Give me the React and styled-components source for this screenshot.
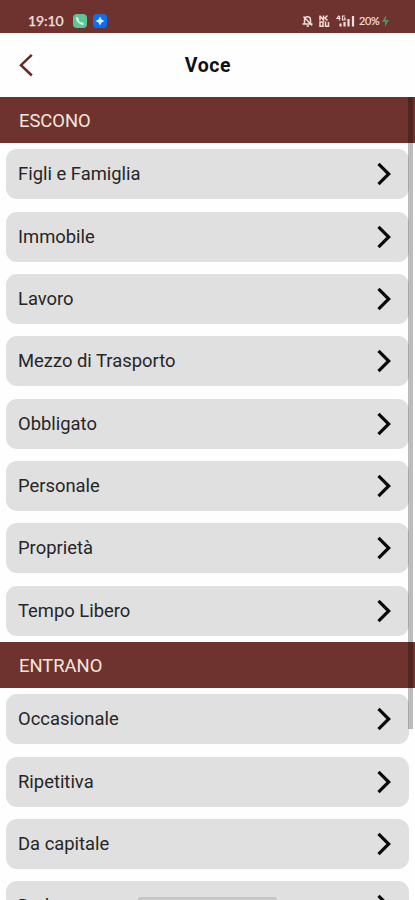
import React from "react";
import styled, { createGlobalStyle } from "styled-components";

const Global = createGlobalStyle`
  * { box-sizing: border-box; }
  body { margin: 0; background: #fff; font-family: Roboto, sans-serif; overflow: hidden; }
`;
const Screen = styled.div`
  position: relative;
  width: 415px;
  height: 900px;
  overflow: hidden;
  display: flex;
  flex-direction: column;
  background: #fefefe;
`;
const StatusBar = styled.div`
  flex: none;
  height: 32.5px;
  padding: 10px 26px 0 28px;
  display: flex;
  align-items: center;
  background: #6e332e;
  color: #f3dfda;
`;
const Clock = styled.span`
  width: 45px;
  font: 500 14px/22px Lato, sans-serif;
  letter-spacing: -0.1px;
  -webkit-text-stroke: 0.25px currentColor;
`;
const AppBadge = styled.span`
  width: 14px;
  height: 14px;
  margin-right: 6px;
  border-radius: 4px;
  display: flex;
  background: ${(p) => p.$color};
`;
const StatusIcons = styled.div`
  margin-left: auto;
  display: flex;
  align-items: center;
`;
const Battery = styled.span`
  margin-left: 3px;
  width: 23px;
  font: 400 10.8px/14px Lato, sans-serif;
  letter-spacing: -0.3px;
  -webkit-text-stroke: 0.2px currentColor;
`;
const TitleBar = styled.header`
  flex: none;
  height: 64.5px;
  padding: 0 18px;
  display: grid;
  grid-template-columns: 24px 1fr 24px;
  align-items: center;
`;
const Title = styled.h1`
  margin: 3px 0 0 1px;
  text-align: center;
  color: #111;
  font: 700 19.5px/24px Roboto, sans-serif;
  letter-spacing: 0.6px;
`;
const SectionHeader = styled.h2`
  margin: 0;
  height: 46px;
  padding: 2px 19px 0;
  display: flex;
  align-items: center;
  background: #6e332e;
  color: #f5e6df;
  font: 400 18.4px/24px Roboto, sans-serif;
`;
const List = styled.div`
  display: flex;
  flex-direction: column;
  gap: 12.35px;
  padding: 6.4px 6px 6px;
`;
const Row = styled.div`
  height: 50px;
  padding: 0 17px 0 12px;
  display: flex;
  align-items: center;
  justify-content: space-between;
  border-radius: 11px;
  background: #e0e0e0;
  color: #262626;
  font: 400 18.4px/24px Roboto, sans-serif;
`;
const ScrollBar = styled.div`
  position: absolute;
  left: 408px;
  top: 97px;
  width: 5px;
  height: 632px;
  background: rgba(0, 0, 0, 0.26);
`;
const HomeBar = styled.div`
  position: absolute;
  left: 138px;
  top: 896.5px;
  width: 139px;
  height: 4px;
  border-radius: 2px 2px 0 0;
  background: #c7c7c7;
`;

const Chevron = () => (
  <svg width="16" height="24" viewBox="0 0 16 24" fill="none" stroke="#0a0a0a" strokeWidth="3.2">
    <path d="M2.500 1.800 12.700 12 2.500 22.200" />
  </svg>
);

const sections = [
  ["ESCONO", ["Figli e Famiglia", "Immobile", "Lavoro", "Mezzo di Trasporto", "Obbligato", "Personale", "Proprietà", "Tempo Libero"]],
  ["ENTRANO", ["Occasionale", "Ripetitiva", "Da capitale", "Da lavoro"]],
];

export default function App() {
  return (
    <Screen>
      <Global />
      <StatusBar>
        <Clock>19:10</Clock>
        <AppBadge $color="#5fc494">
          <svg width="14" height="14" fill="none" stroke="#d9f5e6" strokeWidth="1.8" strokeLinecap="round">
            <path d="M4 4c0 3 3 6 6 6M4 4l1 1.5M10 10 8.5 9" />
          </svg>
        </AppBadge>
        <AppBadge $color="#0b6ff0">
          <svg width="14" height="14" fill="#d8ebff">
            <path d="M7 2.5 8.6 5.4 11.5 7 8.6 8.6 7 11.5 5.4 8.6 2.5 7 5.4 5.4Z" />
          </svg>
        </AppBadge>
        <StatusIcons>
          <svg width="54" height="14" viewBox="0 0 54 14" fill="none" stroke="#f0dcd8" strokeWidth="1.5">
            <path d="M0.500 10h10M2.500 9.500V6c0-4.500 6-4.500 6 0v3.500M4.500 12h2.500M1.500 2.500l8.500 9" />
            <path d="M18 1.500v5M18 2l3.500 4V1.500M25.500 1.500l-2.500 2.500 2.500 2.500M18 8h3v4.200h-3zM23.500 7.500v4.700h3V8" />
            <path d="M37 1.500 35 4.500h3.500M37.500 2v4.500M43 2h-2.500v4H43V4h-1" strokeWidth="1.200" />
            <path d="M38.500 9.500v3M42.500 8v4.500M46.500 5v7.500M51 2v10.500" strokeWidth="2.200" />
          </svg>
          <Battery>20%</Battery>
          <svg width="7" height="12" fill="#45935b"><path d="M4 0 0 7h3v5l4-7H4Z" /></svg>
        </StatusIcons>
      </StatusBar>
      <TitleBar>
        <svg width="16" height="24" viewBox="0 0 16 24" fill="none" stroke="#662820" strokeWidth="2.500">
          <path d="M13.800 1.900 3 12.200l10.800 10.300" />
        </svg>
        <Title>Voce</Title>
      </TitleBar>
      {sections.map(([name, items]) => (
        <section key={name}>
          <SectionHeader>{name}</SectionHeader>
          <List>
            {items.map((item) => (
              <Row key={item}>{item}<Chevron /></Row>
            ))}
          </List>
        </section>
      ))}
      <ScrollBar />
      <HomeBar />
    </Screen>
  );
}
